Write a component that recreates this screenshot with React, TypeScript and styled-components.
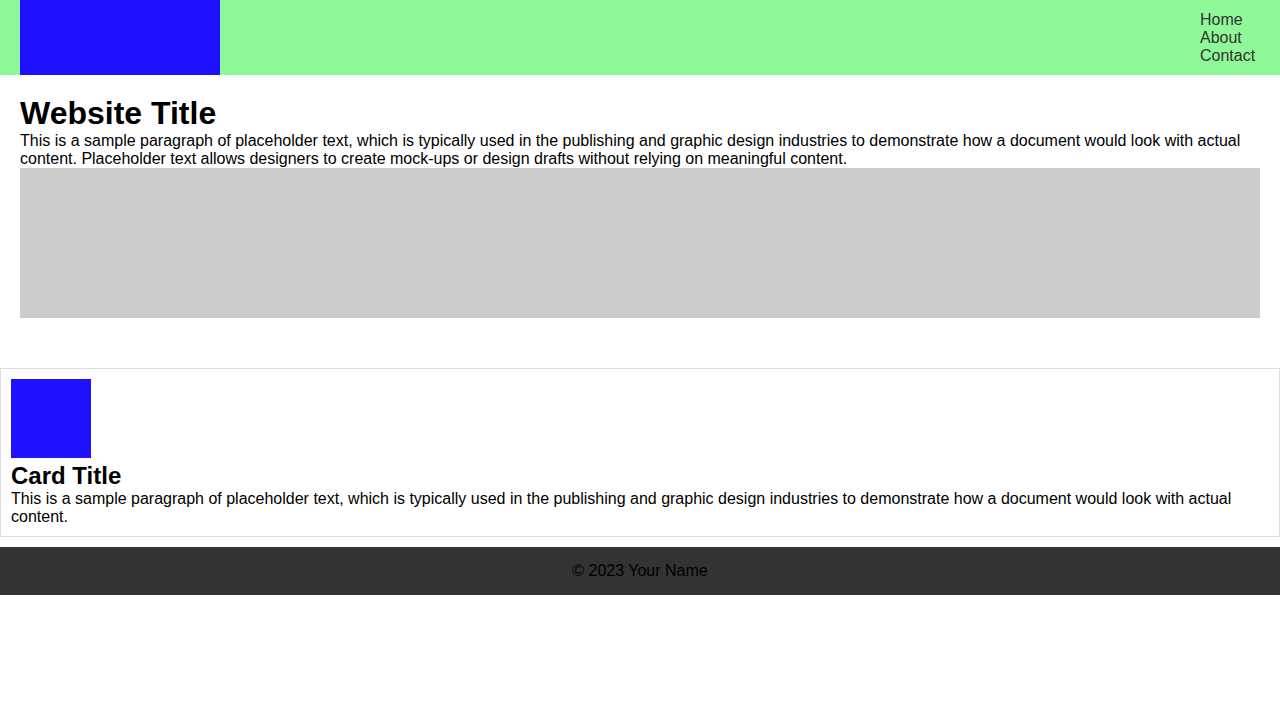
import styled, { createGlobalStyle } from 'styled-components';

const GlobalStyle = createGlobalStyle`
  body {
    margin: 0;
    font-family: 'Liberation Sans', Arial, sans-serif;
    color: #000;
    background: #fff;
  }
`;

const Header = styled.header`
  display: flex;
  justify-content: space-between;
  align-items: center;
  height: 75px;
  padding: 0 20px;
  background-color: #8ff898;
`;

const Logo = styled.div`
  width: 200px;
  height: 75px;
  background-color: #1f10ff;
`;

const NavList = styled.ul`
  list-style-type: none;
  margin: 0;
  padding: 0;
  width: 60px;
`;

const NavItem = styled.li`
  font-size: 16px;
  line-height: 18px;
  color: #333;
`;

const Main = styled.main`
  padding: 20px;
`;

const Title = styled.h1`
  margin: 0;
  font-size: 32px;
  line-height: 37px;
`;

const Text = styled.p`
  margin: 0;
  font-size: 16px;
  line-height: 18px;
`;

const Banner = styled.div`
  height: 150px;
  background-color: #ccc;
`;

const Cards = styled.section`
  padding-top: 30px;
`;

const Card = styled.div`
  border: 1px solid #ddd;
  padding: 10px;
`;

const CardImage = styled.div`
  width: 80px;
  height: 79px;
  background-color: #1f10ff;
  margin-bottom: 4px;
`;

const CardTitle = styled.h2`
  margin: 0;
  font-size: 24px;
  line-height: 28px;
`;

const Footer = styled.footer`
  margin-top: 10px;
  padding: 15px;
  background-color: #333;
  color: #000;
  text-align: center;
  font-size: 16px;
  line-height: 18px;
`;

export default function App() {
  return (
    <>
      <GlobalStyle />
      <Header>
        <Logo />
        <nav>
          <NavList>
            <NavItem>Home</NavItem>
            <NavItem>About</NavItem>
            <NavItem>Contact</NavItem>
          </NavList>
        </nav>
      </Header>
      <Main>
        <Title>Website Title</Title>
        <Text>
          This is a sample paragraph of placeholder text, which is typically used in the publishing and graphic design
          industries to demonstrate how a document would look with actual content. Placeholder text allows designers to
          create mock-ups or design drafts without relying on meaningful content.
        </Text>
        <Banner />
      </Main>
      <Cards>
        <Card>
          <CardImage />
          <CardTitle>Card Title</CardTitle>
          <Text>
            This is a sample paragraph of placeholder text, which is typically used in the publishing and graphic design
            industries to demonstrate how a document would look with actual content.
          </Text>
        </Card>
      </Cards>
      <Footer>© 2023 Your Name</Footer>
    </>
  );
}
